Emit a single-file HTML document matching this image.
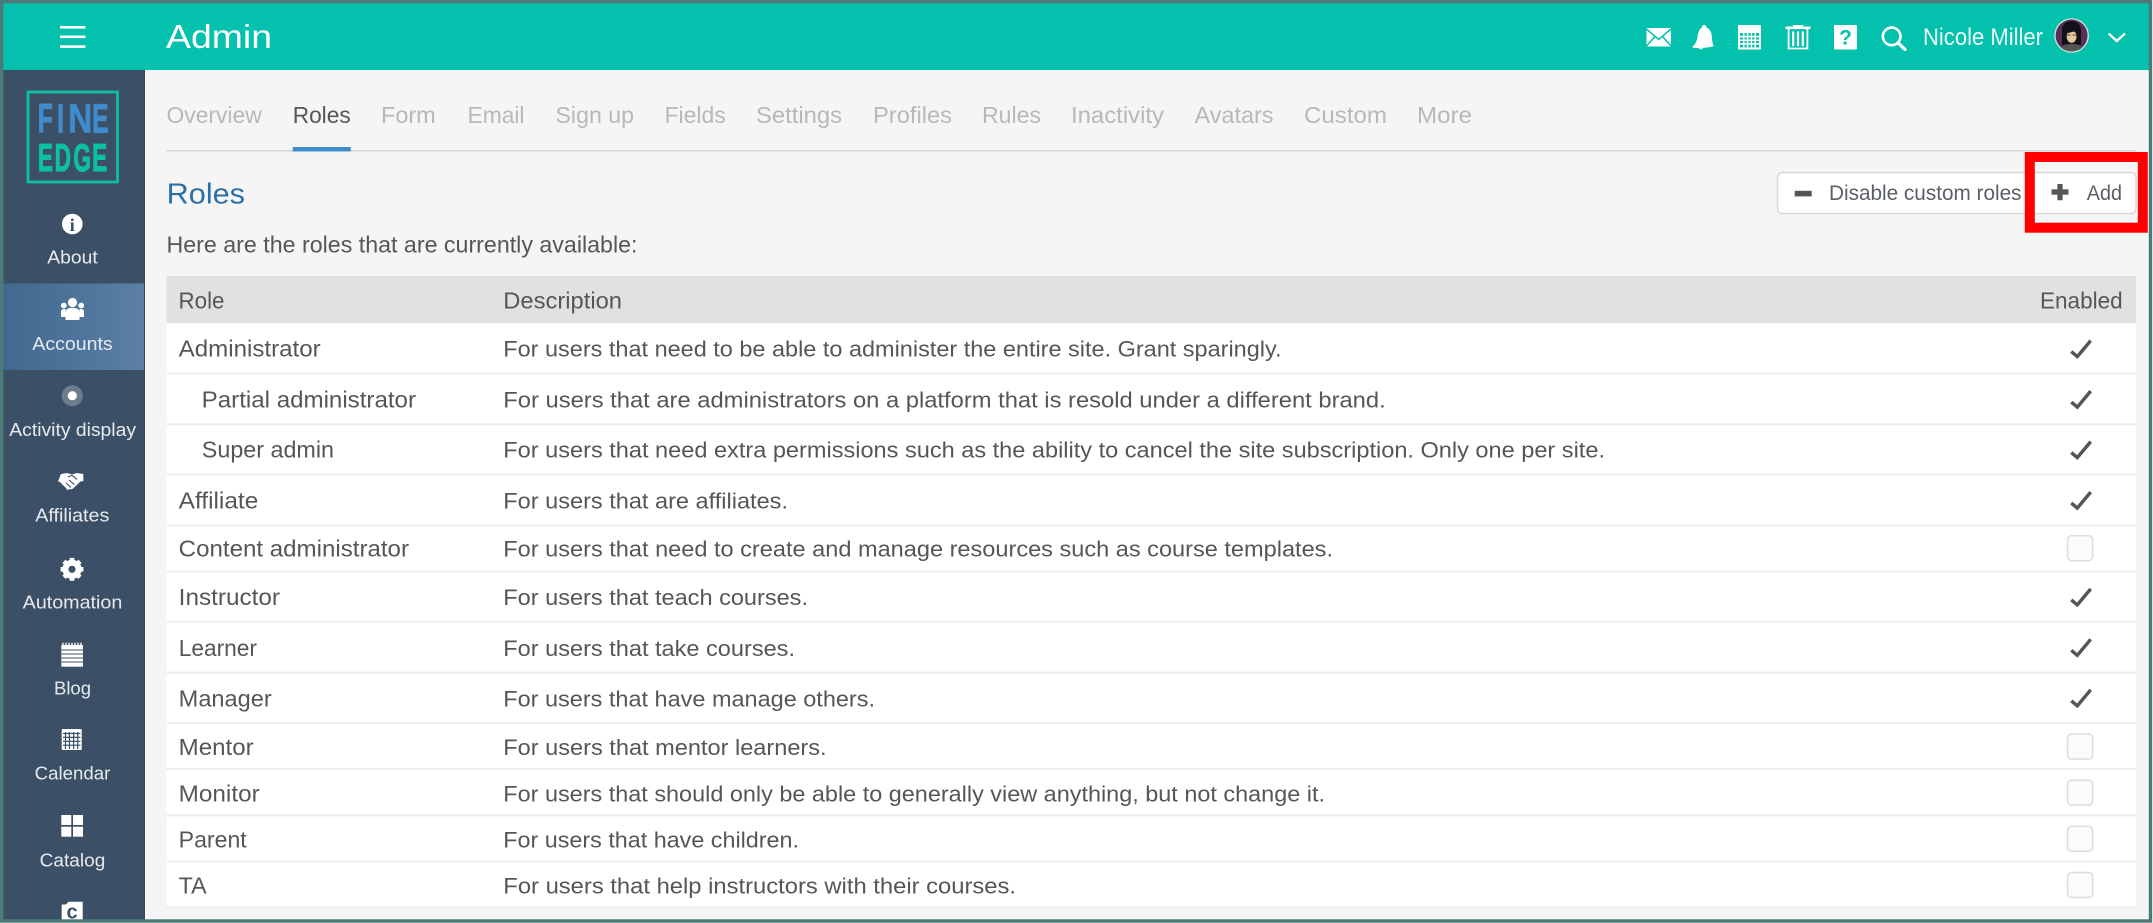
<!DOCTYPE html>
<html lang="en">
<head>
<meta charset="utf-8">
<title>Admin - Roles</title>
<style>
html,body{margin:0;padding:0;background:#fff;width:2153px;height:923px;overflow:hidden}
svg{display:block}
text{font-family:"Liberation Sans",sans-serif}
.nav{font-size:18.5px;fill:#e6eaee;text-anchor:start}
.tab{font-size:23px;fill:#b8b8b8}
.t{font-size:23px;fill:#565656}
.d{font-size:22.5px;fill:#565656}
.line{fill:#ededed}
.chk{fill:none;stroke:#555;stroke-width:3.4}
.box{fill:#fbfbfb;stroke:#dcdcdc;stroke-width:1.5}
</style>
</head>
<body>
<svg width="2153" height="923" viewBox="0 0 2153 923" xmlns="http://www.w3.org/2000/svg">
<defs>
<linearGradient id="act" x1="0" x2="1" y1="0" y2="0"><stop offset="0" stop-color="#41688f"/><stop offset="1" stop-color="#5b7fa6"/></linearGradient>
<clipPath id="avc"><circle cx="2071.6" cy="35.5" r="16"/></clipPath>
</defs>

<!-- content background -->
<rect x="0" y="0" width="2153" height="923" fill="#fff"/>
<rect x="3" y="3" width="2147" height="917" fill="#f5f5f5"/>

<!-- header -->
<rect x="3" y="3" width="2147" height="67" fill="#04c1ae"/>
<rect x="145" y="70" width="2005" height="1" fill="#dff3f0"/>
<rect x="60" y="26" width="25.5" height="2.6" fill="#fff"/>
<rect x="60" y="35.5" width="25.5" height="2.6" fill="#fff"/>
<rect x="60" y="45.3" width="25.5" height="2.6" fill="#fff"/>
<text x="166" y="48" font-size="33" fill="#fff" textLength="106" lengthAdjust="spacingAndGlyphs">Admin</text>

<!-- header icons -->
<g>
<rect x="1646.5" y="28" width="24.5" height="18.5" fill="#fff"/>
<path d="M1646.5 29 L1658.7 39.5 L1671 29 M1646.5 46 L1655 36.5 M1671 46 L1662.5 36.5" fill="none" stroke="#04c1ae" stroke-width="1.5"/>
<path d="M1704 25 c1.8 0 2.6 1.3 2.7 2.6 c3.7 1.7 5 5 5.2 9.5 c.2 4.2 .6 6.5 2 9 c-3.4 1 -7 1.5 -10.6 1.8 c-.5 1.8 -3.5 2 -4.3 .3 c-2.4 0 -4.8 -.3 -7 -.9 c3.4 -3 5.2 -6.6 5.6 -10.8 c.4 -4.6 2.6 -8 4.2 -9 c.1 -1.5 .8 -2.5 2.2 -2.5z" fill="#fff"/>
<rect x="1738" y="25" width="23" height="24.5" rx="1" fill="#fff"/>
<path d="M1740 33h19v14.5h-19z" fill="#04c1ae"/>
<path d="M1740 36.6h19M1740 40.2h19M1740 43.9h19M1743.8 33v14.5M1747.6 33v14.5M1751.4 33v14.5M1755.2 33v14.5" stroke="#fff" stroke-width="1.5" fill="none"/>
<rect x="1785.5" y="26.5" width="25" height="2.6" fill="#fff"/>
<rect x="1793" y="25" width="10" height="2.5" fill="#fff"/>
<path d="M1788.6 29v19.5h18.8V29" fill="none" stroke="#fff" stroke-width="1.8"/>
<path d="M1793.2 31.5v14.6M1798 31.5v14.6M1802.8 31.5v14.6" stroke="#fff" stroke-width="2.2"/>
<rect x="1834" y="25" width="23" height="24.5" rx="1.2" fill="#fff"/>
<text x="1845.5" y="44.5" font-size="21" font-weight="700" fill="#04c1ae" text-anchor="middle">?</text>
<circle cx="1891.7" cy="36.4" r="8.8" fill="none" stroke="#fff" stroke-width="2.6"/>
<path d="M1898 42.8 L1905 49.4" stroke="#fff" stroke-width="3.2" stroke-linecap="round"/>
</g>
<text x="1923" y="45" font-size="24" fill="#eafaf8" textLength="120" lengthAdjust="spacingAndGlyphs">Nicole Miller</text>
<circle cx="2071.6" cy="35.5" r="17.3" fill="#d5e5e3"/>
<circle cx="2071.6" cy="35.5" r="16" fill="#57305a"/>
<g clip-path="url(#avc)">
<path d="M2062 50 v-20 c0 -12 19 -12 19 0 v20z" fill="#14101a"/>
<ellipse cx="2071.6" cy="36.5" rx="5" ry="6.4" fill="#e3c79f"/>
<path d="M2066 33.5 c1 -6 10 -6 11 0 l-3 -2 l-8 2z" fill="#14101a"/>
<path d="M2066.5 35h4M2072.7 35h4" stroke="#5a4a2a" stroke-width="1"/>
<path d="M2058 54 c0 -8 6 -10 13.6 -10 c7.6 0 13.6 2 13.6 10z" fill="#555"/>
</g>
<path d="M2108.6 33.5 L2116.8 41 L2125 33.5" fill="none" stroke="#fff" stroke-width="2.4"/>

<!-- sidebar -->
<rect x="3" y="70" width="141" height="850" fill="#3b5066"/>
<rect x="144" y="70" width="1" height="850" fill="#33465a"/>
<rect x="3" y="283.5" width="141" height="86.5" fill="url(#act)"/>

<!-- logo -->
<rect x="28" y="92" width="89.5" height="90" fill="none" stroke="#0cc0a4" stroke-width="2.8"/>
<g font-size="41" font-weight="700" fill="#3f8bcc" stroke="#3f8bcc">
<text transform="scale(.6,1)" x="63 95.2" y="132.6" stroke-width="1.1">FI</text>
<text transform="scale(.82,1)" x="83.1" y="132.6" stroke-width=".4">N</text>
<text transform="scale(.6,1)" x="153.5" y="132.6" stroke-width="1.1">E</text>
</g>
<text transform="scale(.58,1)" x="65.3 94.1 126.6 158.9" y="170.8" font-size="39" font-weight="700" fill="#0cc0a4" stroke="#0cc0a4" stroke-width="1.1">EDGE</text>

<!-- About -->
<circle cx="72.3" cy="224" r="10.3" fill="#fff"/>
<text x="72.3" y="231" font-size="18" font-weight="700" fill="#3b5066" text-anchor="middle" style="font-family:'Liberation Serif',serif">i</text>
<text class="nav" x="47.3" y="263.3" textLength="50.4" lengthAdjust="spacingAndGlyphs">About</text>

<!-- Accounts -->
<g fill="#fff">
<circle cx="72.5" cy="302.5" r="4.6"/>
<path d="M65.5 320 v-7.5 c0 -3.6 3 -4.6 7 -4.6 c4 0 7 1 7 4.6 v7.5z"/>
<circle cx="63.8" cy="305.5" r="2.9"/>
<circle cx="81.2" cy="305.5" r="2.9"/>
<path d="M61 317 v-5 c0 -2 1 -3 3.5 -3 h1 v8z"/>
<path d="M84 317 v-5 c0 -2 -1 -3 -3.5 -3 h-1 v8z"/>
</g>
<text class="nav" x="32.3" y="350" textLength="80.4" lengthAdjust="spacingAndGlyphs">Accounts</text>

<!-- Activity display -->
<circle cx="72.3" cy="395.7" r="10.5" fill="#6d7d8e"/>
<circle cx="72.3" cy="395.7" r="4.6" fill="#fff"/>
<text class="nav" x="9.3" y="436" textLength="126.7" lengthAdjust="spacingAndGlyphs">Activity display</text>

<!-- Affiliates -->
<path d="M61 474 l6 -1 l5 1.5 l5 -1.5 l6.3 1 v7 l-3 .6 l-7 6.6 c-1 1 -2.2 1.4 -3.2 .8 l-1.6 .8 c-1 .3 -2 -.4 -2 -1.2 l-5 -5 l-1.5 -1.6 l-2 -.6z" fill="#fff"/>
<path d="M66 483 l5 4.4 M69 480 l5.4 4.6 M68 477 l4 -1.6 l5 4" stroke="#3b5066" stroke-width="1.1" fill="none"/>
<text class="nav" x="35.3" y="521.7" textLength="74" lengthAdjust="spacingAndGlyphs">Affiliates</text>

<!-- Automation -->
<g transform="translate(72 569.3)">
<circle r="6.6" fill="none" stroke="#fff" stroke-width="6"/>
<g stroke="#fff" stroke-width="4.6">
<path d="M0 -11.4V-7M0 11.4V7M-11.4 0H-7M11.4 0H7M-8 -8L-5 -5M8 8L5 5M-8 8L-5 5M8 -8L5 -5"/>
</g>
</g>
<text class="nav" x="22.7" y="608.3" textLength="99.6" lengthAdjust="spacingAndGlyphs">Automation</text>

<!-- Blog -->
<rect x="61.3" y="645" width="21.7" height="21.7" fill="#fff"/>
<path d="M63 642.7v3M66 642.7v3M69 642.7v3M72 642.7v3M75 642.7v3M78 642.7v3M81 642.7v3" stroke="#fff" stroke-width="1.4"/>
<path d="M61.3 650h21.7M61.3 654h21.7M61.3 658h21.7M61.3 662h21.7" stroke="#3b5066" stroke-width="1"/>
<text class="nav" x="54" y="694.5" textLength="37" lengthAdjust="spacingAndGlyphs">Blog</text>

<!-- Calendar -->
<rect x="61.7" y="729" width="20" height="21" rx="1" fill="#fff"/>
<path d="M63 733.5h17.4M63 737.4h17.4M63 741.3h17.4M63 745.2h17.4M65.5 732v17M69.4 732v17M73.6 732v17M77.7 732v17" stroke="#3b5066" stroke-width="1.2"/>
<text class="nav" x="34.7" y="779.5" textLength="75.6" lengthAdjust="spacingAndGlyphs">Calendar</text>

<!-- Catalog -->
<g fill="#fff">
<rect x="61.3" y="815" width="10" height="10"/><rect x="73" y="815" width="10" height="10"/>
<rect x="61.3" y="826.7" width="10" height="10"/><rect x="73" y="826.7" width="10" height="10"/>
</g>
<text class="nav" x="39.7" y="866.5" textLength="65.6" lengthAdjust="spacingAndGlyphs">Catalog</text>

<!-- Certificate/next icon -->
<path d="M61.7 904.5 h4 l3 -2.8 h14 v18.3 h-21z" fill="#fff"/>
<text x="72" y="918.5" font-size="20" font-weight="700" fill="#3b5066" text-anchor="middle">c</text>

<!-- tabs -->
<text class="tab" x="166.5" y="123" textLength="95.2" lengthAdjust="spacingAndGlyphs">Overview</text>
<text class="t" x="292.7" y="123" textLength="58" lengthAdjust="spacingAndGlyphs">Roles</text>
<text class="tab" x="381" y="123" textLength="54.7" lengthAdjust="spacingAndGlyphs">Form</text>
<text class="tab" x="467.5" y="123" textLength="57" lengthAdjust="spacingAndGlyphs">Email</text>
<text class="tab" x="555.5" y="123" textLength="78.5" lengthAdjust="spacingAndGlyphs">Sign up</text>
<text class="tab" x="664.5" y="123" textLength="61.3" lengthAdjust="spacingAndGlyphs">Fields</text>
<text class="tab" x="756" y="123" textLength="86" lengthAdjust="spacingAndGlyphs">Settings</text>
<text class="tab" x="873" y="123" textLength="79" lengthAdjust="spacingAndGlyphs">Profiles</text>
<text class="tab" x="982" y="123" textLength="59" lengthAdjust="spacingAndGlyphs">Rules</text>
<text class="tab" x="1071" y="123" textLength="93" lengthAdjust="spacingAndGlyphs">Inactivity</text>
<text class="tab" x="1194.5" y="123" textLength="79" lengthAdjust="spacingAndGlyphs">Avatars</text>
<text class="tab" x="1304" y="123" textLength="83" lengthAdjust="spacingAndGlyphs">Custom</text>
<text class="tab" x="1417" y="123" textLength="55" lengthAdjust="spacingAndGlyphs">More</text>
<rect x="166.5" y="150" width="1969.5" height="1.6" fill="#d6d6d6"/>
<rect x="292.7" y="147" width="58" height="4.4" fill="#3c8dce"/>

<!-- heading + buttons -->
<text x="166.7" y="203.3" font-size="29" fill="#2c6ea8" textLength="78.3" lengthAdjust="spacingAndGlyphs">Roles</text>
<rect x="1777.5" y="172.5" width="358.5" height="41" rx="5" fill="#fff" stroke="#d8d8d8" stroke-width="1.5"/>
<rect x="1794.7" y="190.8" width="17" height="5.6" fill="#555"/>
<text x="1829" y="200" font-size="21.5" fill="#5a5f66" textLength="192.5" lengthAdjust="spacingAndGlyphs">Disable custom roles</text>
<path d="M2051.5 192h17M2060 184v16.2" stroke="#555" stroke-width="5.2" fill="none"/>
<text x="2086.8" y="200" font-size="21.5" fill="#5a5f66" textLength="35.2" lengthAdjust="spacingAndGlyphs">Add</text>
<rect x="2029.8" y="157" width="113" height="70.7" fill="none" stroke="#ff0000" stroke-width="10"/>

<text class="t" x="166.5" y="252.3" textLength="471" lengthAdjust="spacingAndGlyphs">Here are the roles that are currently available:</text>

<!-- table -->
<rect x="166.5" y="276" width="1969.5" height="47.3" fill="#e0e1e3"/>
<rect x="166.5" y="323.3" width="1969.5" height="584.7" fill="#fff"/>
<text class="t" x="178.5" y="308.3" textLength="46" lengthAdjust="spacingAndGlyphs">Role</text>
<text class="t" x="503.3" y="308.3" textLength="118.7" lengthAdjust="spacingAndGlyphs">Description</text>
<text class="t" x="2040" y="308.3" textLength="82.7" lengthAdjust="spacingAndGlyphs">Enabled</text>

<rect class="line" x="166.5" y="372.4" width="1969.5" height="2"/>
<rect class="line" x="166.5" y="423.4" width="1969.5" height="2"/>
<rect class="line" x="166.5" y="473.4" width="1969.5" height="2"/>
<rect class="line" x="166.5" y="524.4" width="1969.5" height="2"/>
<rect class="line" x="166.5" y="570.6" width="1969.5" height="2"/>
<rect class="line" x="166.5" y="620.8" width="1969.5" height="2"/>
<rect class="line" x="166.5" y="671.6" width="1969.5" height="2"/>
<rect class="line" x="166.5" y="721.8" width="1969.5" height="2"/>
<rect class="line" x="166.5" y="768.1" width="1969.5" height="2"/>
<rect class="line" x="166.5" y="814.4" width="1969.5" height="2"/>
<rect class="line" x="166.5" y="860.4" width="1969.5" height="2"/>
<rect class="line" x="166.5" y="906.3" width="1969.5" height="2"/>

<text class="t" x="178.7" y="356.7" textLength="142" lengthAdjust="spacingAndGlyphs">Administrator</text>
<text class="d" x="503.3" y="356.7" textLength="778.2" lengthAdjust="spacingAndGlyphs">For users that need to be able to administer the entire site. Grant sparingly.</text>
<text class="t" x="201.7" y="407.3" textLength="214.3" lengthAdjust="spacingAndGlyphs">Partial administrator</text>
<text class="d" x="503.3" y="407.3" textLength="882.4" lengthAdjust="spacingAndGlyphs">For users that are administrators on a platform that is resold under a different brand.</text>
<text class="t" x="201.8" y="457.7" textLength="132.2" lengthAdjust="spacingAndGlyphs">Super admin</text>
<text class="d" x="503.3" y="457.7" textLength="1101.7" lengthAdjust="spacingAndGlyphs">For users that need extra permissions such as the ability to cancel the site subscription. Only one per site.</text>
<text class="t" x="178.7" y="508.3" textLength="79.6" lengthAdjust="spacingAndGlyphs">Affiliate</text>
<text class="d" x="503.3" y="508.3" textLength="284.7" lengthAdjust="spacingAndGlyphs">For users that are affiliates.</text>
<text class="t" x="178.7" y="556.7" textLength="230.3" lengthAdjust="spacingAndGlyphs">Content administrator</text>
<text class="d" x="503.3" y="556.7" textLength="829.7" lengthAdjust="spacingAndGlyphs">For users that need to create and manage resources such as course templates.</text>
<text class="t" x="178.7" y="605" textLength="101.3" lengthAdjust="spacingAndGlyphs">Instructor</text>
<text class="d" x="503.3" y="605" textLength="304.7" lengthAdjust="spacingAndGlyphs">For users that teach courses.</text>
<text class="t" x="178.7" y="656" textLength="78.3" lengthAdjust="spacingAndGlyphs">Learner</text>
<text class="d" x="503.3" y="656" textLength="291.7" lengthAdjust="spacingAndGlyphs">For users that take courses.</text>
<text class="t" x="178.7" y="706.7" textLength="93" lengthAdjust="spacingAndGlyphs">Manager</text>
<text class="d" x="503.3" y="706.7" textLength="371.7" lengthAdjust="spacingAndGlyphs">For users that have manage others.</text>
<text class="t" x="178.7" y="755" textLength="75" lengthAdjust="spacingAndGlyphs">Mentor</text>
<text class="d" x="503.3" y="755" textLength="323.3" lengthAdjust="spacingAndGlyphs">For users that mentor learners.</text>
<text class="t" x="178.7" y="801.7" textLength="81" lengthAdjust="spacingAndGlyphs">Monitor</text>
<text class="d" x="503.3" y="801.7" textLength="821.7" lengthAdjust="spacingAndGlyphs">For users that should only be able to generally view anything, but not change it.</text>
<text class="t" x="178.7" y="847.7" textLength="68" lengthAdjust="spacingAndGlyphs">Parent</text>
<text class="d" x="503.3" y="847.7" textLength="295.7" lengthAdjust="spacingAndGlyphs">For users that have children.</text>
<text class="t" x="178.7" y="893.3" textLength="28" lengthAdjust="spacingAndGlyphs">TA</text>
<text class="d" x="503.3" y="893.3" textLength="512.7" lengthAdjust="spacingAndGlyphs">For users that help instructors with their courses.</text>

<!-- checks -->
<polyline class="chk" points="2071.3,351.6 2077.3,356.6 2090.7,340.6"/>
<polyline class="chk" points="2071.3,402.1 2077.3,407.1 2090.7,391.1"/>
<polyline class="chk" points="2071.3,452.6 2077.3,457.6 2090.7,441.6"/>
<polyline class="chk" points="2071.3,503.1 2077.3,508.1 2090.7,492.1"/>
<rect class="box" x="2067.6" y="535.7" width="25" height="25" rx="4"/>
<polyline class="chk" points="2071.3,599.9 2077.3,604.9 2090.7,588.9"/>
<polyline class="chk" points="2071.3,650.3 2077.3,655.3 2090.7,639.3"/>
<polyline class="chk" points="2071.3,700.8 2077.3,705.8 2090.7,689.8"/>
<rect class="box" x="2067.6" y="734" width="25" height="25" rx="4"/>
<rect class="box" x="2067.6" y="780.1" width="25" height="25" rx="4"/>
<rect class="box" x="2067.6" y="826.3" width="25" height="25" rx="4"/>
<rect class="box" x="2067.6" y="872.5" width="25" height="25" rx="4"/>

<!-- outer frame -->
<rect x="1.7" y="1.7" width="2148.8" height="919.3" fill="none" stroke="#4d7a78" stroke-width="3.4"/>
</svg>
</body>
</html>
